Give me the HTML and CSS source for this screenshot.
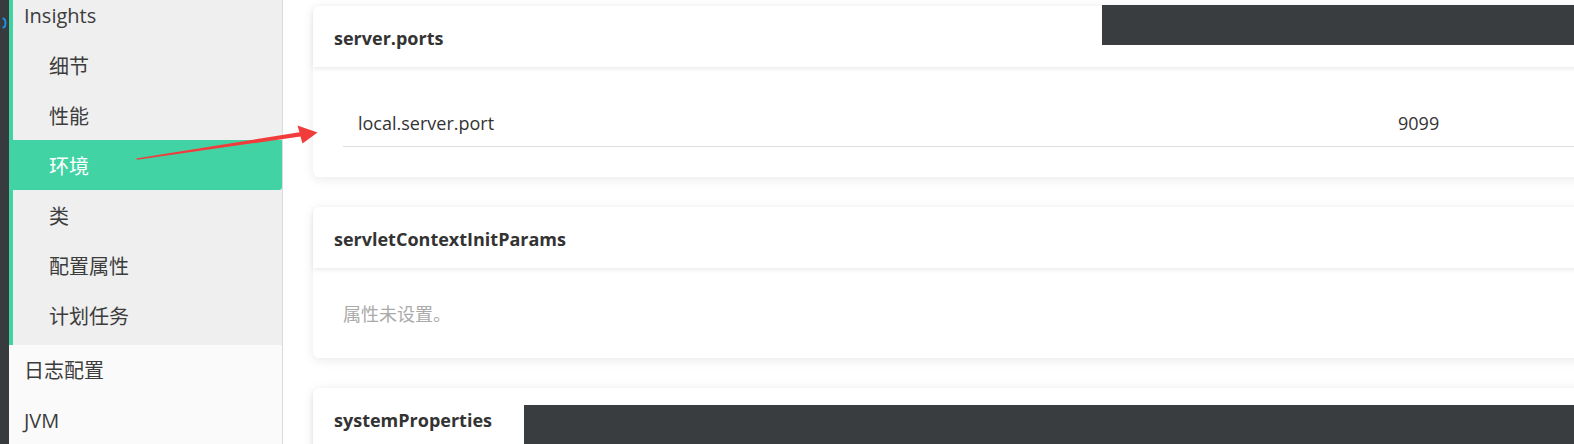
FILE: index.html
```html
<!DOCTYPE html>
<html lang="zh">
<head>
<meta charset="utf-8">
<link rel="stylesheet" href="styles.css">
</head>
<body>
<div class="app">
  <div class="rail">
    <svg class="rail-mark" width="9" height="14" viewBox="0 0 9 14"><path d="M4.5 2.5 C7 2.5 7.5 5 7.5 7 C7.5 9 7 11.5 4.5 11.5" fill="none" stroke="#1f8fe0" stroke-width="2"/></svg>
  </div>
  <nav class="sidebar">
    <div class="group">
      <div class="group-title">Insights</div>
      <div class="sub-item">细节</div>
      <div class="sub-item">性能</div>
      <div class="sub-item active">环境</div>
      <div class="sub-item">类</div>
      <div class="sub-item">配置属性</div>
      <div class="sub-item">计划任务</div>
    </div>
    <div class="nav-item">日志配置</div>
    <div class="nav-item">JVM</div>
  </nav>
  <main class="main">
    <section class="card">
      <header class="card-header">server.ports</header>
      <div class="card-body">
        <div class="prop-row">
          <span class="prop-key">local.server.port</span>
          <span class="prop-val">9099</span>
        </div>
      </div>
    </section>
    <section class="card">
      <header class="card-header">servletContextInitParams</header>
      <div class="card-body">
        <div class="empty">属性未设置。</div>
      </div>
    </section>
    <section class="card">
      <header class="card-header">systemProperties</header>
      <div class="card-body">
        <div class="empty">&nbsp;</div>
      </div>
    </section>
  </main>
</div>
<div class="mask mask-top"></div>
<div class="mask mask-bottom"></div>
<svg class="arrow" width="1574" height="444" viewBox="0 0 1574 444">
  <polygon points="136,158.5 299.5,132.2 297.5,125.5 317.5,132.5 302.5,143.5 300.5,136.5 137,159.8" fill="#f23c3c"/>
</svg>
</body>
</html>
```
FILE: styles.css
```css
html, body {
  margin: 0;
  padding: 0;
  width: 1574px;
  height: 444px;
  overflow: hidden;
  background: #fff;
}
body {
  font-family: "Open Sans", "Noto Sans CJK SC", sans-serif;
  color: #333;
  position: relative;
}
.app {
  display: flex;
  height: 444px;
  overflow: hidden;
}
.rail {
  width: 9px;
  flex: none;
  background: #373b3e;
  padding-top: 16px;
  box-sizing: border-box;
}
.rail-mark {
  display: block;
  margin-left: -2px;
}
.sidebar {
  width: 273px;
  flex: none;
  background: #fafafa;
  border-right: 1px solid #dcdcdc;
  font-size: 20px;
  color: #3c3c3c;
}
.group {
  margin-top: -10px;
  border-left: 4px solid #42d3a5;
  background: #efefef;
  padding-bottom: 5px;
}
.group-title {
  height: 50px;
  line-height: 52px;
  padding-left: 11px;
}
.sub-item {
  height: 50px;
  line-height: 53px;
  padding-left: 36px;
}
.sub-item.active {
  background: #42d3a5;
  color: #fff;
  border-radius: 0 0 3px 0;
}
.nav-item {
  height: 50px;
  line-height: 52px;
  padding-left: 15px;
}
.main {
  flex: none;
  width: 1290px;
  padding: 6px 0 0 30px;
  display: flex;
  flex-direction: column;
  gap: 30px;
  background: #fff;
  overflow: hidden;
}
.card {
  width: 1600px;
  background: #fff;
  border-radius: 6px;
  box-shadow: 0 2px 12px rgba(0, 0, 0, 0.09);
  flex: none;
}
.card-header {
  height: 61px;
  line-height: 64px;
  padding-left: 21px;
  font-size: 18px;
  font-weight: 700;
  color: #333;
  box-shadow: 0 2px 4px rgba(0, 0, 0, 0.08);
  border-radius: 6px 6px 0 0;
  position: relative;
}
.card-body {
  padding: 30px 0 30px 30px;
  font-size: 18px;
}
.prop-row {
  display: flex;
  height: 49px;
  line-height: 53px;
  border-bottom: 1px solid #dedede;
}
.prop-key {
  width: 1021px;
  padding-left: 15px;
  flex: none;
}
.prop-val {
  padding-left: 19px;
}
.empty {
  line-height: 32px;
  height: 30px;
  color: #aaa;
}
.mask {
  position: absolute;
  background: #3a3d40;
}
.mask-top {
  left: 1102px;
  top: 5px;
  width: 472px;
  height: 40px;
}
.mask-bottom {
  left: 524px;
  top: 405px;
  width: 1050px;
  height: 39px;
}
.arrow {
  position: absolute;
  left: 0;
  top: 0;
  pointer-events: none;
}
```
